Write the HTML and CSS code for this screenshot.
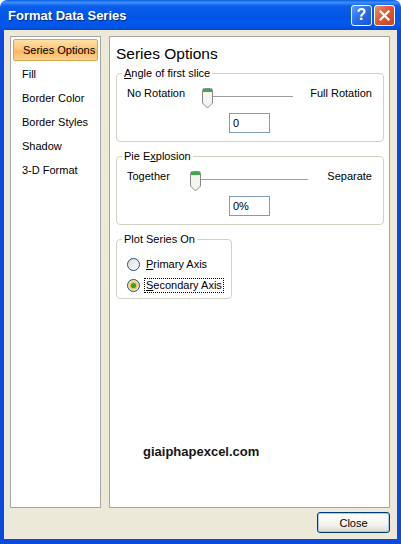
FILE: index.html
```html
<!DOCTYPE html>
<html lang="en">
<head>
  <meta charset="UTF-8" />
  <meta name="viewport" content="width=device-width, initial-scale=1.0" />
  <title>Format Data Series</title>
  <link rel="stylesheet" href="styles.css">
</head>
<body>

  <div class="window">

    <!-- Title bar -->
    <div class="titlebar">
      <span class="title">Format Data Series</span>
      <div class="title-buttons">
        <span class="tbtn tbtn-help">?</span>
        <span class="tbtn tbtn-close">
          <svg width="11" height="11" viewBox="0 0 11 11">
            <path d="M1.5 1.5 L9.5 9.5 M9.5 1.5 L1.5 9.5" stroke="#fff" stroke-width="2.2" stroke-linecap="square"/>
          </svg>
        </span>
      </div>
    </div>

    <div class="frame">
      <div class="panes">

        <ul class="nav">
          <li class="active">Series Options</li>
          <li>Fill</li>
          <li>Border Color</li>
          <li>Border Styles</li>
          <li>Shadow</li>
          <li>3-D Format</li>
        </ul>

        <div class="content">
          <h2>Series Options</h2>

          <fieldset class="group">
            <legend><u>A</u>ngle of first slice</legend>
            <div class="slider-row">
              <span>No Rotation</span>
              <div class="slider slider-angle">
                <svg class="thumb" width="11" height="21" viewBox="0 0 11 21">
                  <path d="M0.5 2.5 Q0.5 0.5 2.5 0.5 L8.5 0.5 Q10.5 0.5 10.5 2.5 L10.5 15 L5.5 20 L0.5 15 Z" fill="#f4f4f0" stroke="#8a8a8a"/>
                  <rect x="1" y="1" width="9" height="3" fill="#3faa4a"/>
                </svg>
                <div class="track"></div>
              </div>
              <span>Full Rotation</span>
            </div>
            <input class="num" type="text" value="0">
          </fieldset>

          <fieldset class="group">
            <legend>Pie E<u>x</u>plosion</legend>
            <div class="slider-row">
              <span>Together</span>
              <div class="slider slider-explode">
                <svg class="thumb" width="11" height="21" viewBox="0 0 11 21">
                  <path d="M0.5 2.5 Q0.5 0.5 2.5 0.5 L8.5 0.5 Q10.5 0.5 10.5 2.5 L10.5 15 L5.5 20 L0.5 15 Z" fill="#f4f4f0" stroke="#8a8a8a"/>
                  <rect x="1" y="1" width="9" height="3" fill="#3faa4a"/>
                </svg>
                <div class="track"></div>
              </div>
              <span>Separate</span>
            </div>
            <input class="num" type="text" value="0%">
          </fieldset>

          <fieldset class="group group-plot">
            <legend>Plot Series On</legend>
            <div class="radio-row">
              <svg class="radio" width="13" height="13" viewBox="0 0 13 13">
                <defs>
                  <linearGradient id="rg" x1="0" y1="0" x2="1" y2="1">
                    <stop offset="0" stop-color="#dcdcd6"/>
                    <stop offset="1" stop-color="#ffffff"/>
                  </linearGradient>
                </defs>
                <circle cx="6.5" cy="6.5" r="6" fill="url(#rg)" stroke="#1c5180"/>
              </svg>
              <span class="radio-label"><u>P</u>rimary Axis</span>
            </div>
            <div class="radio-row">
              <svg class="radio" width="13" height="13" viewBox="0 0 13 13">
                <circle cx="6.5" cy="6.5" r="6" fill="#f6e4b4" stroke="#1c5180"/>
                <circle cx="6.5" cy="6.5" r="4.2" fill="#f9c65a"/>
                <circle cx="6.5" cy="6.5" r="2.6" fill="#2fa52f"/>
              </svg>
              <span class="radio-label focused"><u>S</u>econdary Axis</span>
            </div>
          </fieldset>

          <p class="watermark">giaiphapexcel.com</p>
        </div>

      </div>

      <div class="footer">
        <button class="btn">Close</button>
      </div>
    </div>

  </div>

</body>
</html>
```

FILE: styles.css
```css
* {
  margin: 0;
  padding: 0;
  box-sizing: border-box;
  font-family: 'Liberation Sans', Arial, sans-serif;
}
body {
  background: #fff;
}
.window {
  width: 401px;
  height: 544px;
  display: flex;
  flex-direction: column;
  border-radius: 7px 7px 0 0;
  overflow: hidden;
}
/* Title bar */
.titlebar {
  height: 30px;
  display: flex;
  align-items: center;
  padding: 0 6px 0 8px;
  background: linear-gradient(to bottom, #0a5ee8 0%, #3d8ef6 8%, #0b5fee 20%, #0055e5 55%, #0058ec 85%, #0348d2 100%);
}
.title {
  color: #fff;
  font-weight: bold;
  font-size: 13px;
  text-shadow: 1px 1px 0 #0a2a80;
}
.title-buttons {
  margin-left: auto;
  display: flex;
  gap: 2px;
}
.tbtn {
  width: 21px;
  height: 21px;
  border: 1px solid #fff;
  border-radius: 3px;
  display: flex;
  align-items: center;
  justify-content: center;
  color: #fff;
  font-weight: bold;
  font-size: 16px;
}
.tbtn-help {
  background: linear-gradient(135deg, #5b9cf7 0%, #2a6ae6 50%, #1b52d4 100%);
}
.tbtn-close {
  background: linear-gradient(135deg, #f0906c 0%, #e05a33 45%, #c9421c 100%);
}
/* Window body */
.frame {
  flex: 1;
  display: flex;
  flex-direction: column;
  background: #ece9d8;
  border: 4px solid #0a4ade;
  border-top: none;
  border-bottom-width: 5px;
  padding: 6px 7px 6px 6px;
}
.panes {
  display: flex;
  gap: 8px;
  height: 472px;
}
/* Left list */
.nav {
  list-style: none;
  width: 91px;
  background: #fff;
  border: 1px solid #a5a5a5;
  padding: 1px 0;
}
.nav li {
  height: 24px;
  line-height: 24px;
  padding-left: 11px;
  font-size: 11px;
  color: #000;
}
.nav li.active {
  height: 22px;
  line-height: 20px;
  margin: 1px 2px;
  padding-left: 9px;
  border: 1px solid #d9a64f;
  border-radius: 2px;
  background: linear-gradient(to bottom, #ffe0a6 0%, #fdc77a 45%, #fbb55b 55%, #fdd596 100%);
}
/* Right content */
.content {
  flex: 1;
  background: #fff;
  border: 1px solid #a5a5a5;
  padding: 7px 5px 0 6px;
}
.content h2 {
  font-size: 15.5px;
  font-weight: normal;
  line-height: 20px;
  margin-bottom: 2px;
  color: #000;
}
.group {
  border: 1px solid #d3d0c4;
  border-radius: 4px;
  padding: 8px 11px 8px 10px;
  margin-bottom: 7px;
  min-inline-size: 0;
  display: flex;
  flex-direction: column;
}
.group legend {
  font-size: 11px;
  line-height: 14px;
  padding: 0 2px;
  margin-left: -5px;
  color: #000;
}
.slider-row {
  display: flex;
  justify-content: space-between;
  align-items: flex-start;
  height: 20px;
  font-size: 11px;
  line-height: 13px;
  color: #000;
}
.slider-row span {
  margin-top: -1px;
}
.slider {
  display: flex;
  align-items: flex-start;
}
.slider-angle {
  width: 91px;
}
.slider-explode {
  width: 118px;
}
.thumb {
  display: block;
  flex: none;
}
.track {
  flex: 1;
  height: 2px;
  margin-top: 8px;
  border-top: 1px solid #a0a0a0;
  border-bottom: 1px solid #fff;
}
.num {
  align-self: center;
  width: 41px;
  height: 20px;
  margin-top: 5px;
  border: 1px solid #7f9db9;
  padding-left: 3px;
  font-size: 11px;
  color: #000;
  outline: none;
}
.group-plot {
  width: 116px;
  padding: 8px 4px 2px 10px;
}
.radio-row {
  display: flex;
  align-items: center;
  height: 21px;
  font-size: 11px;
  color: #000;
}
.radio {
  display: block;
  flex: none;
}
.radio-label {
  margin-left: 4px;
  padding: 0 1px;
  border: 1px dotted transparent;
  line-height: 13px;
}
.radio-label.focused {
  border-color: #000;
}
.watermark {
  margin: 145px 0 0 27px;
  font-size: 13px;
  font-weight: bold;
  line-height: 16px;
  color: #161616;
}
/* Footer */
.footer {
  display: flex;
  justify-content: flex-end;
  margin-top: 4px;
}
.btn {
  width: 73px;
  height: 21px;
  border: 1px solid #003c74;
  border-radius: 3px;
  background: linear-gradient(to bottom, #ffffff 0%, #f4f3ee 60%, #dcd8cc 100%);
  box-shadow: inset 0 0 0 1px #a9c5f0;
  font-size: 11px;
  color: #000;
}
```
